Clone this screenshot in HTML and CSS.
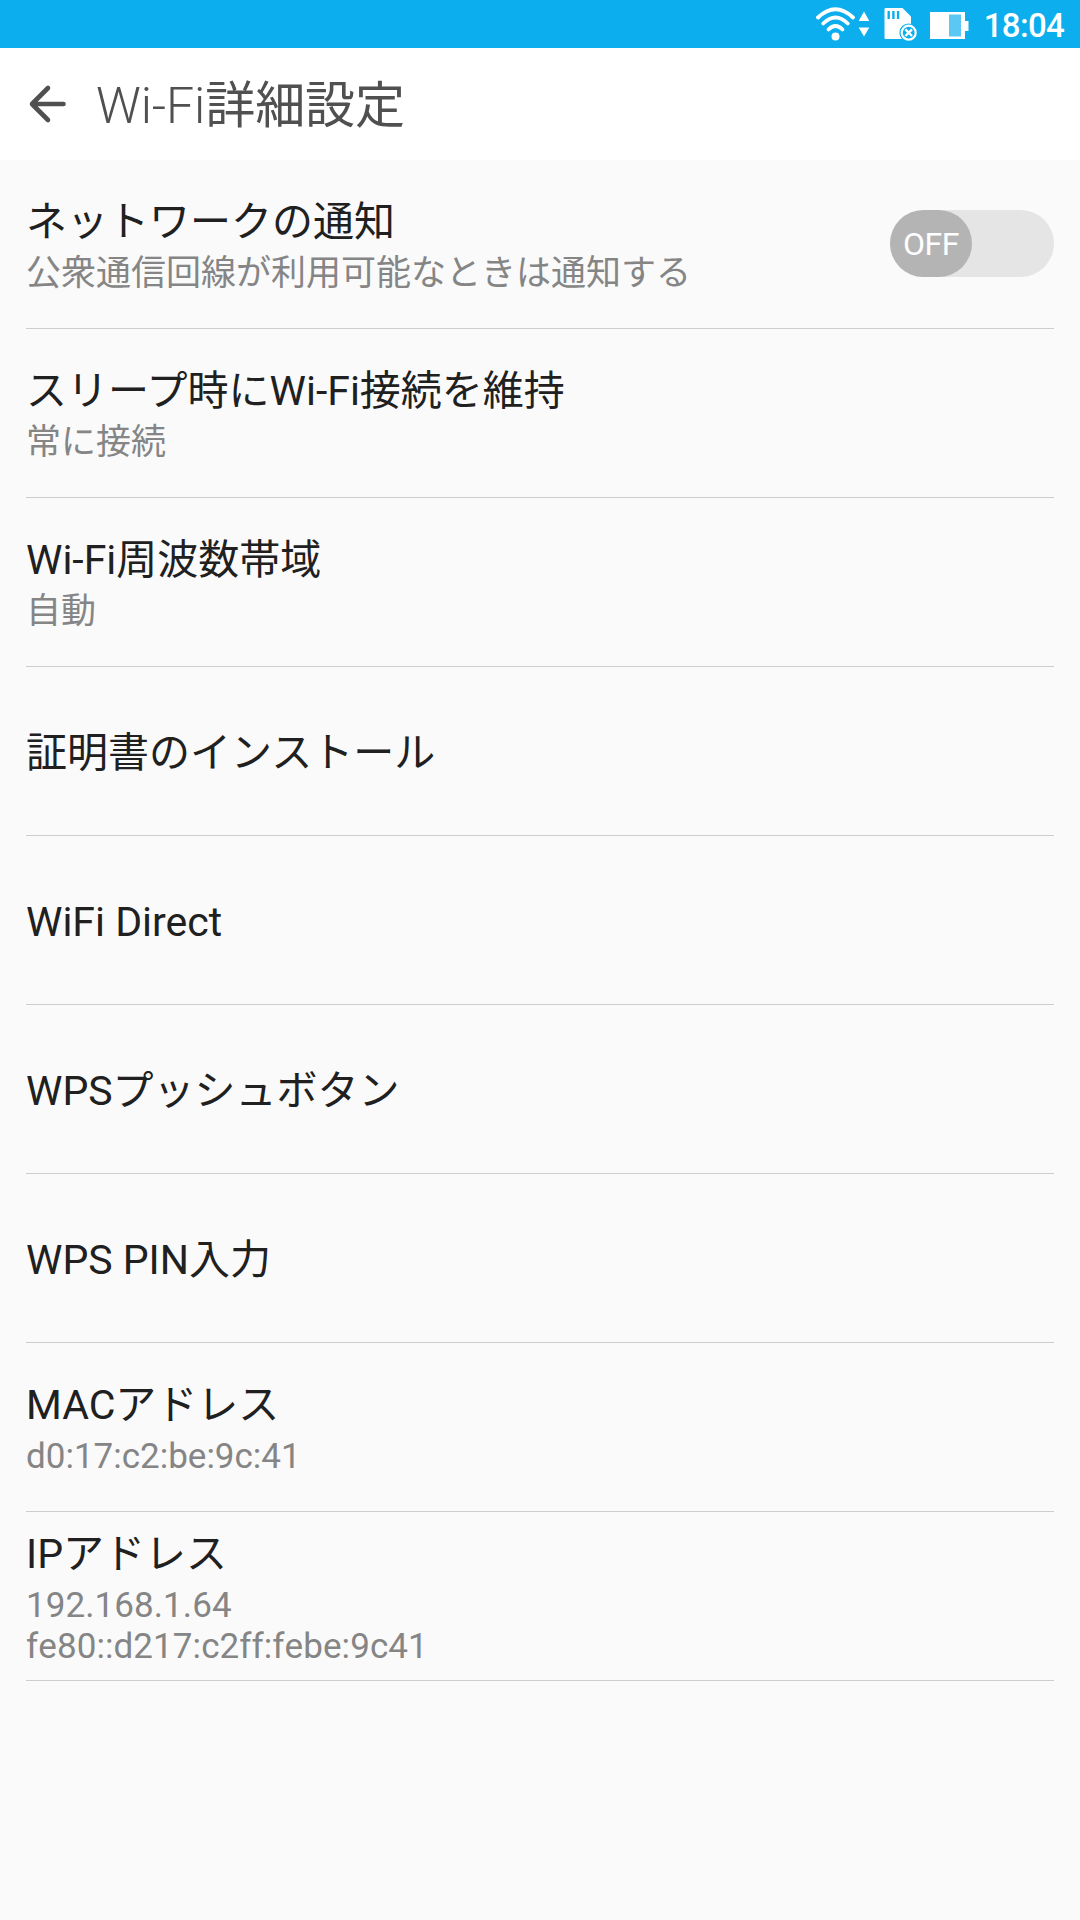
FILE: index.html
```
<!DOCTYPE html>
<html lang="ja">
<head>
    <meta charset="UTF-8">
    <meta name="viewport" content="width=device-width, initial-scale=1.0">
    <title>Wi-Fi詳細設定</title>
    <link rel="stylesheet" href="styles.css">
</head>
<body>
<div class="status-bar">
    <svg class="wifi" width="54" height="36" viewBox="0 0 54 36" fill="none" stroke="#fff" stroke-width="3.8" stroke-linecap="round">
        <path d="M2 11.5Q19.5 -5 37 11.5"/>
        <path d="M7.2 17.5Q19.5 5.5 31.8 17.5"/>
        <path d="M12.5 23.5Q19.5 16.5 26.5 23.5"/>
        <circle cx="19.5" cy="30.5" r="4" fill="#fff" stroke="none"/>
        <path d="M48 5.5L53.3 15H42.7ZM48 30.5L53.3 21.5H42.7Z" fill="#fff" stroke="none"/>
    </svg>
    <svg class="sd" width="34" height="36" viewBox="0 0 34 36">
        <path d="M1.5 2H18.5L27 10.5V33H1.5Q.5 33 .5 32V3Q.5 2 1.5 2Z" fill="#fff"/>
        <path d="M4.7 5V13M9.4 5V13M14.1 5V13" stroke="#0caeed" stroke-width="2.4"/>
        <circle cx="24.7" cy="26.7" r="9.3" fill="#0caeed"/>
        <circle cx="24.7" cy="26.7" r="7" fill="#0caeed" stroke="#fff" stroke-width="2.2"/>
        <path d="M21.4 23.4L28 30M28 23.4L21.4 30" stroke="#fff" stroke-width="2.4"/>
    </svg>
    <svg class="battery" width="39" height="28" viewBox="0 0 39 28">
        <path d="M0 0H35V9H38.5V19H35V27H0Z" fill="#fff"/>
        <path d="M19 2.5H31V24.5H19Z" fill="#5bc8f3"/>
    </svg>
    <span class="clock">18:04</span>
</div>

<div class="header">
    <svg class="back" width="40" height="40" viewBox="0 0 40 40" fill="none" stroke="#505050" stroke-width="4.6" stroke-linecap="round" stroke-linejoin="round">
        <path d="M20 4L4 20L20 36M5 20H35.5"/>
    </svg>
    <h1><span class="latin">Wi-Fi</span>詳細設定</h1>
</div>

<ul class="settings">
    <li class="row">
        <div class="text">
            <p class="title">ネットワークの通知</p>
            <p class="summary">公衆通信回線が利用可能なときは通知する</p>
        </div>
        <div class="switch"><span class="thumb">OFF</span></div>
    </li>
    <li class="row">
        <div class="text">
            <p class="title">スリープ時にWi-Fi接続を維持</p>
            <p class="summary">常に接続</p>
        </div>
    </li>
    <li class="row">
        <div class="text">
            <p class="title">Wi-Fi周波数帯域</p>
            <p class="summary">自動</p>
        </div>
    </li>
    <li class="row">
        <p class="title">証明書のインストール</p>
    </li>
    <li class="row">
        <p class="title">WiFi Direct</p>
    </li>
    <li class="row">
        <p class="title">WPSプッシュボタン</p>
    </li>
    <li class="row">
        <p class="title">WPS PIN入力</p>
    </li>
    <li class="row">
        <div class="text">
            <p class="title">MACアドレス</p>
            <p class="summary">d0:17:c2:be:9c:41</p>
        </div>
    </li>
    <li class="row">
        <div class="text">
            <p class="title">IPアドレス</p>
            <p class="summary address">192.168.1.64<br>fe80::d217:c2ff:febe:9c41</p>
        </div>
    </li>
</ul>
</body>
</html>
```
FILE: styles.css
```
* {
    box-sizing: border-box;
    margin: 0;
    padding: 0;
}

body {
    min-height: 100vh;
    background: #fafafa;
    color: #202020;
    font-family: Roboto, "Noto Sans CJK JP", sans-serif;
}

.status-bar {
    display: flex;
    justify-content: flex-end;
    height: 48px;
    padding-right: 16px;
    background: #0caeed;
    color: #fff;
}

.wifi {
    margin-top: 6px;
}

.sd {
    margin: 6px 0 0 14px;
}

.battery {
    margin: 12px 0 0 12px;
}

.clock {
    width: 81px;
    margin-left: 14px;
    font-size: 33px;
    font-weight: 500;
    line-height: 51px;
    letter-spacing: -0.7px;
    text-align: right;
}

.header {
    display: flex;
    align-items: center;
    height: 112px;
    padding: 0 28px;
    background: #fff;
    color: #505050;
}

.header h1 {
    padding-top: 4px;
    margin-left: 28px;
    font-size: 50px;
    font-weight: 400;
    line-height: 60px;
    letter-spacing: -0.1px;
}

.latin {
    font-weight: 300;
}

.settings {
    padding: 0 26px;
    list-style: none;
}

.row {
    display: flex;
    justify-content: space-between;
    align-items: center;
    height: 169px;
    padding-top: 4px;
    border-bottom: 1px solid #cdcdcd;
}

.title {
    font-size: 41px;
    line-height: 48px;
}

.summary {
    margin-top: 7px;
    color: #858585;
    font-size: 35px;
    line-height: 41px;
    font-kerning: none;
}

.address {
    letter-spacing: 0.08px;
}

.switch {
    width: 164px;
    height: 67px;
    margin-bottom: 5px;
    border-radius: 34px;
    background: #e5e5e5;
}

.thumb {
    display: block;
    width: 82px;
    height: 67px;
    border-radius: 34px;
    background: #b4b4b4;
    color: #fff;
    font-size: 32px;
    line-height: 69px;
    letter-spacing: -0.4px;
    text-align: center;
}
```
